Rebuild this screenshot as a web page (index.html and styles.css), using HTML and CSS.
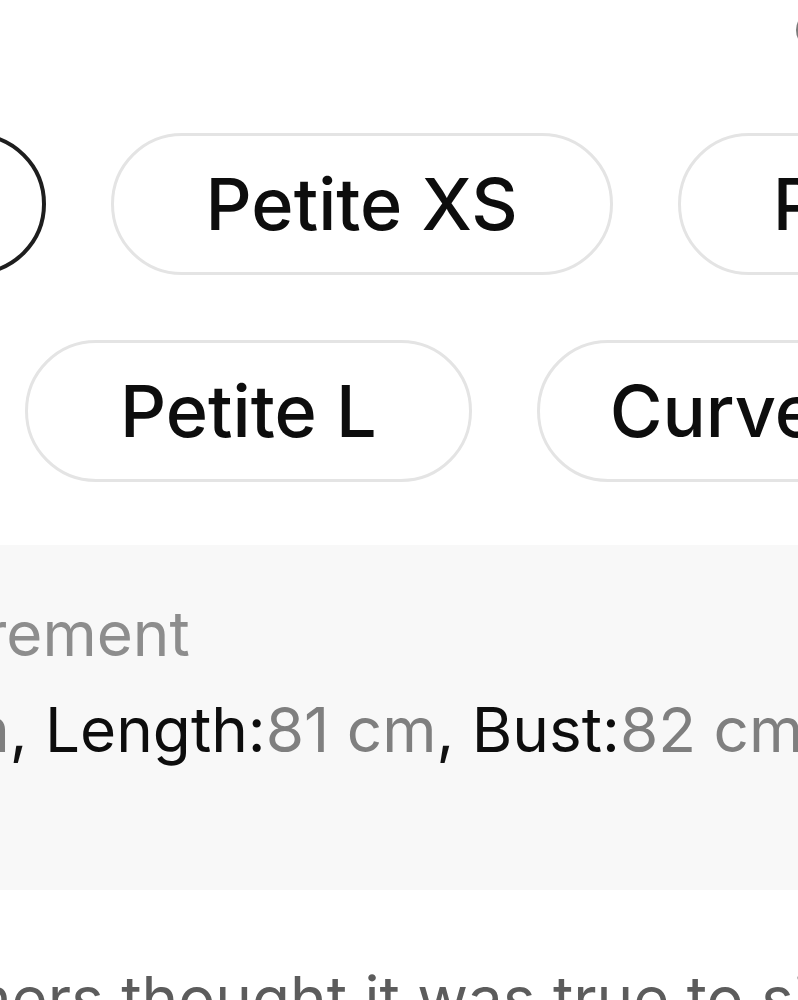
FILE: index.html
```html
<!DOCTYPE html>
<html lang="en">
<head>
<meta charset="utf-8">
<title>Size selection</title>
<link rel="stylesheet" href="styles.css">
</head>
<body>
<div class="page">
  <div class="top">
    <span class="close-btn"></span>
  </div>
  <div class="sizes">
    <div class="row row-1">
      <button class="chip chip-selected">Petite XXS</button>
      <button class="chip">Petite XS</button>
      <button class="chip">Petite S</button>
    </div>
    <div class="row row-2">
      <button class="chip">Petite L</button>
      <button class="chip chip-long">Curve 0XL</button>
    </div>
  </div>
  <div class="panel">
    <p class="panel-title">Measurement</p>
    <p class="panel-values"><span class="k">Waist:</span><span class="v">66 cm</span>, <span class="k">Length:</span><span class="v">81 cm</span>, <span class="k">Bust:</span><span class="v">82 cm</span></p>
  </div>
  <p class="fit-note">Most customers thought it was true to size.</p>
</div>
</body>
</html>
```
FILE: styles.css
```css
* { box-sizing: border-box; }
html, body {
  margin: 0;
  padding: 0;
  background: #ffffff;
}
body {
  width: 798px;
  height: 1000px;
  overflow: hidden;
  font-family: "Inter", "Noto Sans", sans-serif;
  color: #111111;
}
.page {
  width: 798px;
  overflow: hidden;
}
.top {
  height: 133px;
  display: flex;
  justify-content: flex-end;
  align-items: flex-start;
}
.close-btn {
  display: block;
  width: 40px;
  height: 40px;
  border-radius: 50%;
  border: 2.5px solid #7a7a7a;
  margin-top: 10px;
  margin-right: -38px;
  flex: none;
}
.sizes {
  display: flex;
  flex-direction: column;
  gap: 65px;
}
.row {
  display: flex;
  gap: 65px;
  white-space: nowrap;
}
.row-1 { margin-left: -509px; }
.row-2 { margin-left: 25px; }
.chip {
  flex: none;
  height: 142px;
  padding: 0 92px;
  border: 3px solid #e4e4e4;
  border-radius: 71px;
  background: #ffffff;
  font-family: "Inter", "Noto Sans", sans-serif;
  font-size: 72px;
  font-weight: 500;
  color: #0d0d0d;
  line-height: 1;
  display: flex;
  align-items: center;
  justify-content: center;
}
.chip-selected {
  border: 4px solid #1e1e1e;
}
.chip-long {
  padding: 0 70px;
}
.panel {
  margin-top: 63px;
  height: 345px;
  background: #f8f8f8;
  padding-top: 41px;
  overflow: hidden;
}
.panel-title,
.panel-values {
  margin: 0;
  font-size: 62px;
  line-height: 96px;
  white-space: nowrap;
}
.panel-title {
  color: #8d8d8d;
  margin-left: -213px;
}
.panel-values {
  margin-left: -353px;
}
.k { color: #0d0d0d; }
.v { color: #7f7f7f; }
.fit-note {
  margin: 61px 0 0 -368px;
  font-size: 62px;
  line-height: 96px;
  color: #5c5c5c;
  white-space: nowrap;
}
```
